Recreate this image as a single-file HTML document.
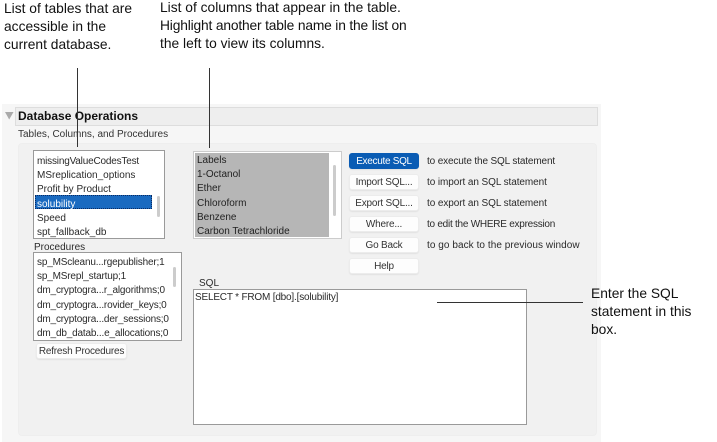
<!DOCTYPE html>
<html><head><meta charset="utf-8"><style>
html,body{margin:0;padding:0;background:#fff}
#p{position:relative;width:717px;height:442px;overflow:hidden;font-family:"Liberation Sans",sans-serif;background:#fff;filter:blur(.25px)}
#p div{position:absolute;box-sizing:border-box;white-space:nowrap}
.n{font-size:13.800px;line-height:17.800px;color:#111}
.t{font-size:10px;line-height:14px;color:#2a2a2a}
.b{background:#fdfdfd;border:1px solid #ececec;border-radius:3px;box-shadow:0 1px 1px #e2e2e2;text-align:center;font-size:10px;line-height:16px;color:#333;left:349px;width:70px;height:16px;letter-spacing:-.2px}
.box{background:#fff;border:1px solid #9a9a9a}
.l{background:#333}
</style></head><body><div id="p">
<div class="n" style="left:4px;top:0px">List of tables that are<br>accessible in the<br>current database.</div>
<div class="n" style="left:160px;top:-1px">List of columns that appear in the table.<br><span style="letter-spacing:-.17px">Highlight another table name in the list on</span><br>the left to view its columns.</div>
<div style="left:2px;top:104px;width:599px;height:338px;background:#f6f6f6"></div>
<div style="left:15px;top:107px;width:583px;height:19px;background:#eee;border:1px solid #ddd"></div>
<svg style="position:absolute;left:5px;top:112px" width="9" height="8"><path d="M0 0H8.500L4.200 7.500Z" fill="#aaa"/></svg>
<div style="left:18px;top:108px;font-size:12px;line-height:17px;font-weight:bold;color:#111">Database Operations</div>
<div class="t" style="left:18px;top:128px;color:#333">Tables, Columns, and Procedures</div>
<div style="left:18px;top:143px;width:579px;height:293px;background:#f1f1f1;border-radius:4px;border:1px solid #eee"></div>

<div class="box" style="left:33px;top:150px;width:132px;height:89px"></div>
<div style="left:35px;top:195px;width:117px;height:14px;background:#1a6ac0;border:1px dotted #0a2a60"></div>
<div style="left:157px;top:196px;width:3px;height:21px;background:#ccc;border-radius:2px"></div>
<div class="t" style="left:37px;top:155px;line-height:14.200px">
<span style="letter-spacing:-.19px">missingValueCodesTest</span><br>MSreplication_options<br>Profit by Product<br><span style="color:#fff">solubility</span><br>Speed<br>spt_fallback_db</div>

<div class="t" style="left:34px;top:241px">Procedures</div>
<div class="box" style="left:33px;top:252px;width:149px;height:89px"></div>
<div style="left:173px;top:267px;width:3px;height:20px;background:#ccc;border-radius:2px"></div>
<div class="t" style="left:37px;top:256px;line-height:14.200px;letter-spacing:-.17px">sp_MScleanu...rgepublisher;1<br>sp_MSrepl_startup;1<br>dm_cryptogra...r_algorithms;0<br>dm_cryptogra...rovider_keys;0<br>dm_cryptogra...der_sessions;0<br>dm_db_datab...e_allocations;0</div>
<div class="b" style="left:36px;top:343px;width:91px;height:16px;line-height:16px;letter-spacing:-.2px">Refresh Procedures</div>

<div class="box" style="left:193px;top:151px;width:149px;height:88px;border-color:#ccc"></div>
<div style="left:195px;top:153px;width:134px;height:84px;background:#b6b6b6"></div>
<div style="left:333px;top:165px;width:3px;height:51px;background:#ccc;border-radius:2px"></div>
<div class="t" style="left:197px;top:154px;line-height:14.200px;color:#222">Labels<br>1-Octanol<br>Ether<br>Chloroform<br>Benzene<br>Carbon Tetrachloride</div>

<div class="b" style="top:153px;background:#0a5cb4;border-color:#0a5cb4;color:#fff;letter-spacing:-.3px">Execute SQL</div>
<div class="b" style="top:174px">Import SQL...</div>
<div class="b" style="top:195px">Export SQL...</div>
<div class="b" style="top:216px">Where...</div>
<div class="b" style="top:237px">Go Back</div>
<div class="b" style="top:258px">Help</div>

<div class="t" style="left:427px;top:155px;letter-spacing:-.14px">to execute the SQL statement</div>
<div class="t" style="left:427px;top:176px;letter-spacing:-.08px">to import an SQL statement</div>
<div class="t" style="left:427px;top:197px;letter-spacing:-.08px">to export an SQL statement</div>
<div class="t" style="left:427px;top:218px;letter-spacing:-.25px">to edit the WHERE expression</div>
<div class="t" style="left:427px;top:239px;letter-spacing:.06px">to go back to the previous window</div>

<div class="t" style="left:199px;top:277px">SQL</div>
<div class="box" style="left:193px;top:289px;width:334px;height:136px"></div>
<div class="t" style="left:195px;top:291px;letter-spacing:-.19px">SELECT * FROM [dbo].[solubility]</div>

<div class="l" style="left:77px;top:68px;width:1px;height:79px"></div>
<div class="l" style="left:209px;top:68px;width:1px;height:80px"></div>
<div class="l" style="left:437px;top:302px;width:146px;height:1px"></div>
<div class="n" style="left:591px;top:285px">Enter the SQL<br>statement in this<br>box.</div>
</div></body></html>
